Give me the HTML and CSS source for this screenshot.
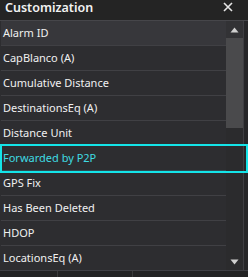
FILE: index.html
```html
<!DOCTYPE html>
<html>
<head>
<meta charset="utf-8">
<link rel="stylesheet" href="styles.css">
</head>
<body>
<div class="panel">
  <div class="header">
    <span class="title">Customization</span>
    <svg class="close" width="10" height="10" viewBox="0 0 10 10"><path d="M1 1L9 9M9 1L1 9" stroke="#e6e6e6" stroke-width="1.6"/></svg>
  </div>
  <div class="listbox">
    <div class="rows">
      <div class="row hover">Alarm ID</div>
      <div class="row">CapBlanco (A)</div>
      <div class="row">Cumulative Distance</div>
      <div class="row">DestinationsEq (A)</div>
      <div class="row">Distance Unit</div>
      <div class="row selected">Forwarded by P2P</div>
      <div class="row">GPS Fix</div>
      <div class="row">Has Been Deleted</div>
      <div class="row">HDOP</div>
      <div class="row">LocationsEq (A)</div>
    </div>
    <div class="scrollbar">
      <div class="sbtn up"><svg width="9" height="6" viewBox="0 0 9 6"><path d="M4.5 0.5L8.5 5.5H0.5Z" fill="#d0d0d0"/></svg></div>
      <div class="thumb"></div>
      <div class="track"></div>
      <div class="sbtn down"><svg width="9" height="6" viewBox="0 0 9 6"><path d="M0.5 0.5H8.5L4.5 5.5Z" fill="#d0d0d0"/></svg></div>
    </div>
    <div class="edge"></div>
  </div>
  <div class="footer">
    <div class="fcell c1"></div>
    <div class="fcell c2"></div>
    <div class="fcell c3"></div>
  </div>
  <div class="focus"></div>
</div>
</body>
</html>
```
FILE: styles.css
```css
html, body {
  margin: 0;
  padding: 0;
  background: #242424;
}
.panel {
  position: relative;
  width: 248px;
  height: 277px;
  overflow: hidden;
  font-family: "Noto Sans", "Open Sans", sans-serif;
  color: #f0f0f0;
}
.header {
  height: 20px;
  display: flex;
  align-items: center;
  justify-content: space-between;
  padding: 0 15px 0 5px;
  background: #242424;
}
.title {
  font-size: 12.5px;
  font-weight: 600;
  color: #f2f2f2;
  line-height: 20px;
  margin-top: -5px;
}
.close {
  margin-top: -6px;
}
.listbox {
  display: flex;
  height: 251px;
  border-top: 1px solid #46464a;
  border-bottom: 1px solid #3e3e42;
  box-sizing: border-box;
  background: #2d2d30;
}
.rows {
  width: 226px;
  margin-left: 1px;
  display: flex;
  flex-direction: column;
}
.row {
  height: 24px;
  flex: none;
  border-bottom: 1px solid #404044;
  font-size: 11px;
  line-height: 24px;
  padding-left: 2px;
  white-space: nowrap;
}
.row.hover {
  background: #37373b;
}
.row.selected {
  color: #3fdbe2;
  border-bottom-color: #2f4a52;
}
.scrollbar {
  width: 17px;
  display: flex;
  flex-direction: column;
  background: #2b2b2d;
}
.sbtn {
  height: 17px;
  flex: none;
  display: flex;
  align-items: center;
  justify-content: center;
}
.sbtn.up {
  background: #323235;
}
.thumb {
  height: 90px;
  flex: none;
  background: #4a4a4c;
}
.track {
  flex: 1;
}
.edge {
  width: 4px;
  border-left: 1px solid #3e3e42;
  background: #262628;
}
.footer {
  display: flex;
  height: 6px;
  background: #232323;
}
.fcell {
  border-right: 1px solid #3a3a3a;
}
.c1 { width: 57px; }
.c2 { width: 74px; }
.c3 { flex: 1; border-right: none; }
.focus {
  position: absolute;
  left: 0;
  top: 144px;
  width: 248px;
  height: 29px;
  box-sizing: border-box;
  border: 2px solid #14e4e8;
}
```
